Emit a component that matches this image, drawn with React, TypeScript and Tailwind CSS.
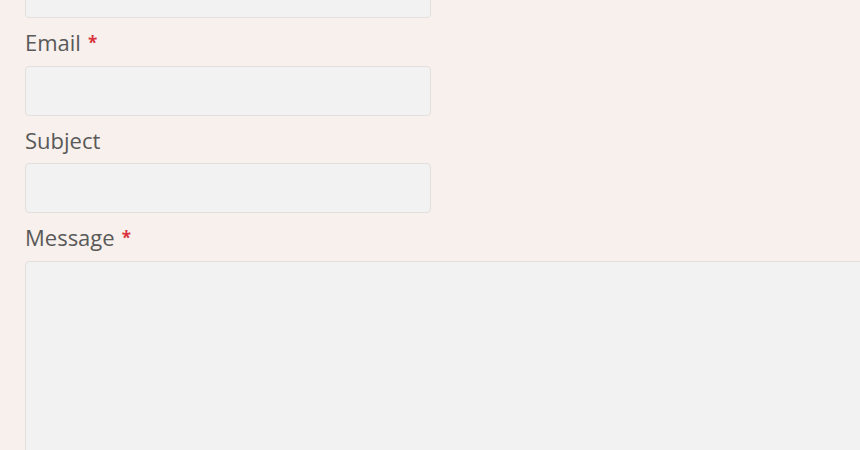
import React from 'react';

type Field = { label: string; required?: boolean; multiline?: boolean };

const fields: Field[] = [
  { label: 'Email', required: true },
  { label: 'Subject' },
  { label: 'Message', required: true, multiline: true },
];

const inputCls =
  'block w-[406px] h-[50px] rounded-[4px] border border-[#e3dfdc] bg-[#f2f2f2] px-3 text-[18px] text-[#555] outline-none';

const ContactForm: React.FC = () => {
  return (
    <div
      className="h-[450px] w-[860px] overflow-hidden bg-[#f8f0ec] pl-[25px]"
      style={{ fontFamily: '"Open Sans", "Liberation Sans", sans-serif' }}
    >
      {/* name field, scrolled mostly out of view */}
      <input type="text" className={`${inputCls} mt-[-32px]`} />

      {fields.map((f) => (
        <div key={f.label}>
          <label className="block pt-[9px] pb-[8px] text-[22px] leading-[30px] text-[#595959]">
            {f.label}
            {f.required && (
              <span className="ml-[7px] align-[2px] text-[17px] font-bold text-[#d9343f]">*</span>
            )}
          </label>
          {f.multiline ? (
            <textarea className="block h-[220px] w-[860px] resize-none rounded-[4px] border border-[#e3dfdc] bg-[#f2f2f2] p-3 outline-none" />
          ) : (
            <input type="text" className={inputCls} />
          )}
        </div>
      ))}
    </div>
  );
};

export default function App() {
  return <ContactForm />;
}
